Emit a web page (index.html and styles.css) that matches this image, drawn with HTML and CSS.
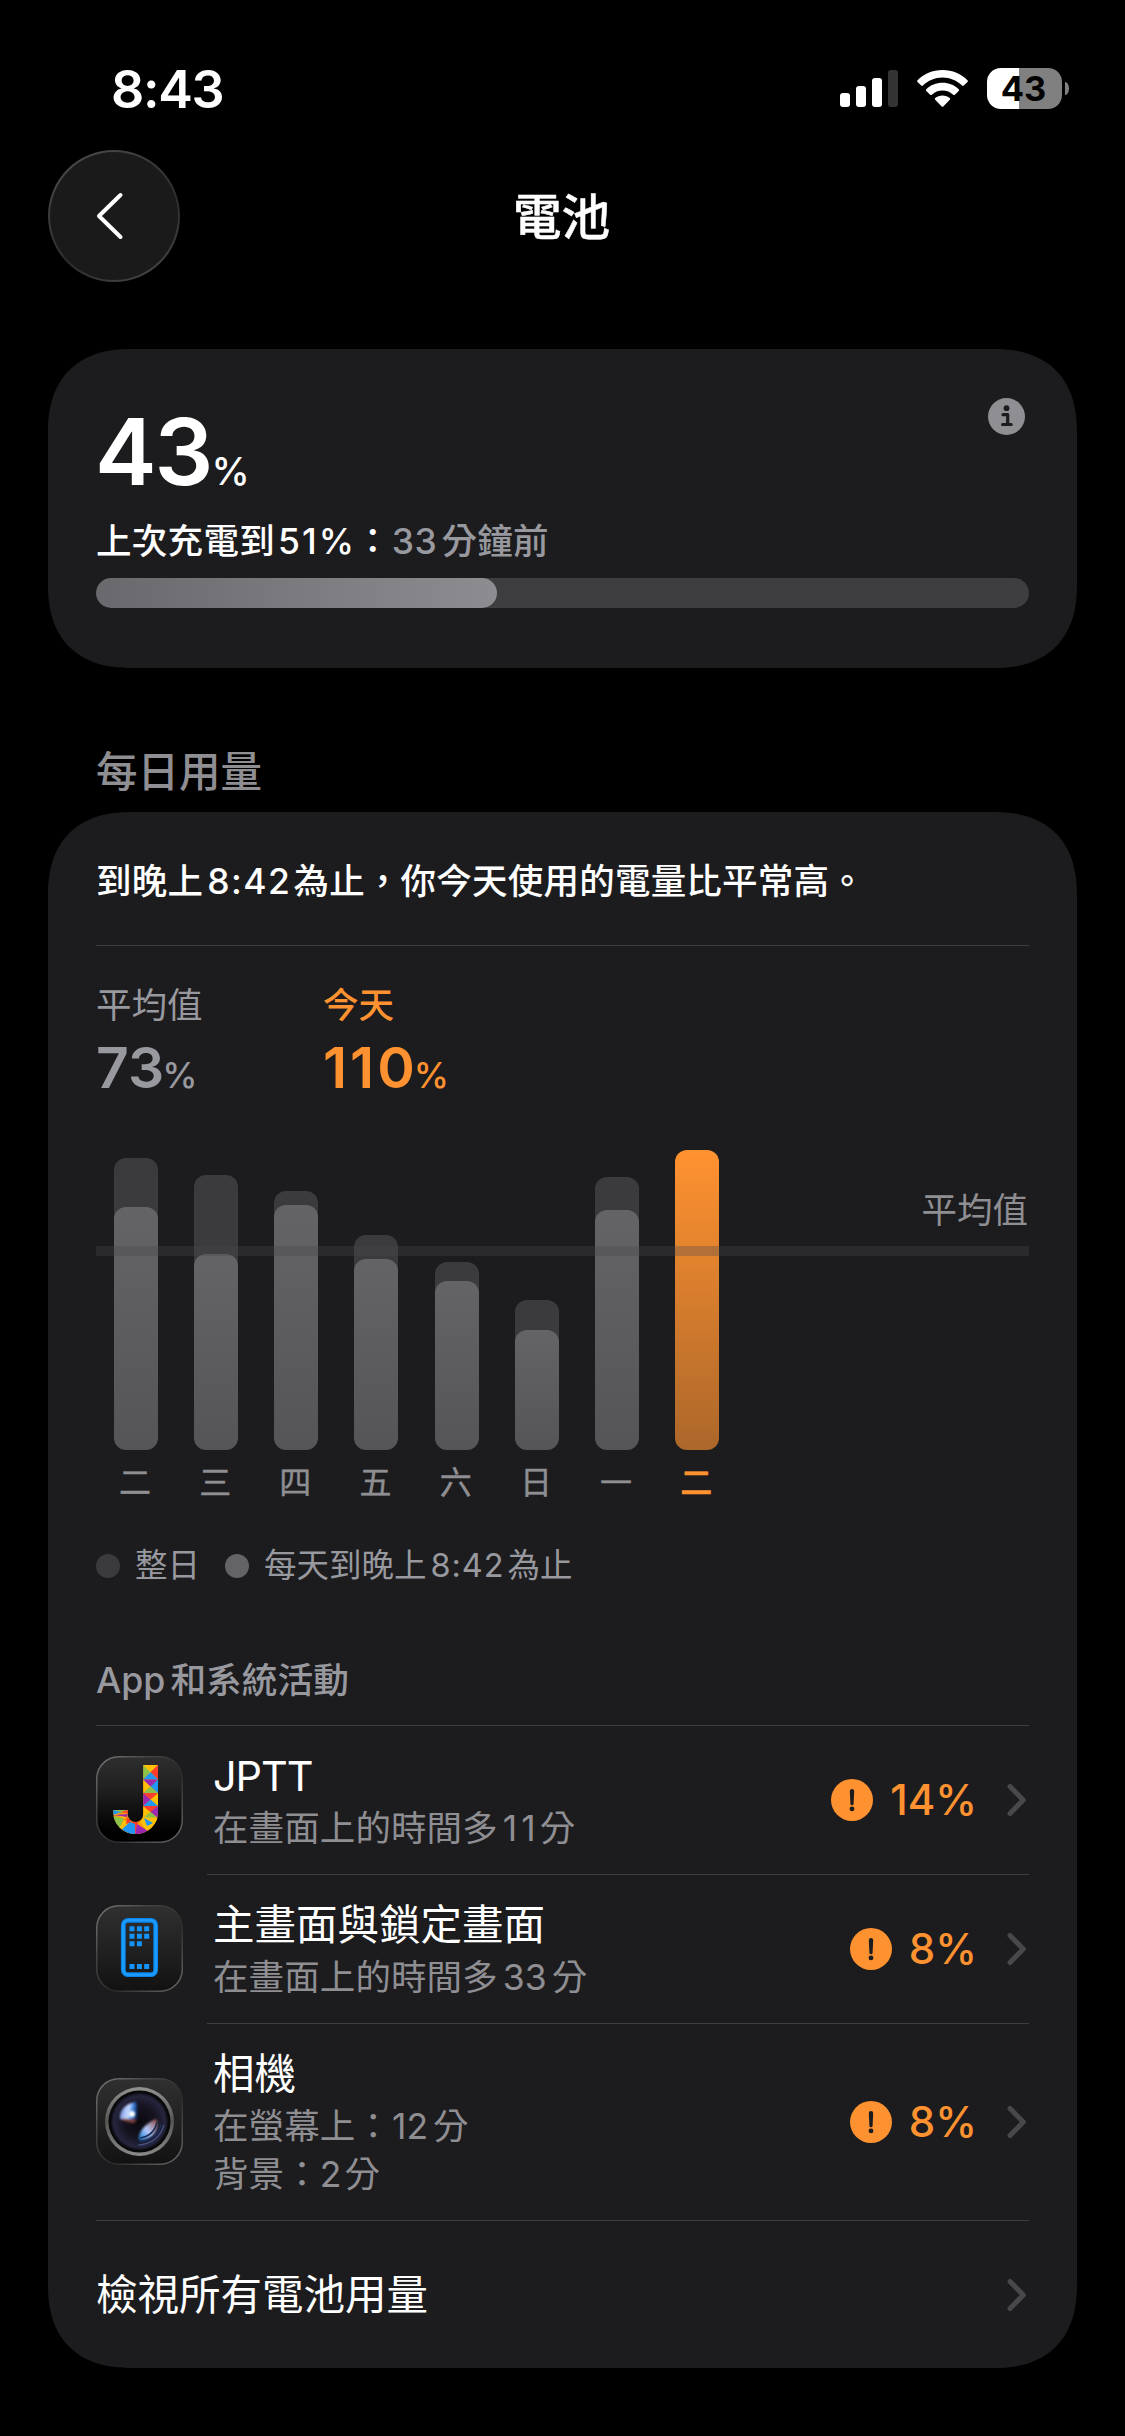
FILE: index.html
```html
<!DOCTYPE html>
<html lang="zh-Hant">
<head>
<meta charset="utf-8">
<title>電池</title>
<link rel="stylesheet" href="styles.css">
</head>
<body>
<svg class="defs" width="0" height="0" aria-hidden="true">
  <defs>
    <linearGradient id="tile" x1="0" y1="0" x2="0" y2="1"><stop offset="0" stop-color="#303030"/><stop offset="1" stop-color="#121212"/></linearGradient>
    <linearGradient id="tileDark" x1="0" y1="0" x2="0" y2="1"><stop offset="0" stop-color="#2e2e2e"/><stop offset=".35" stop-color="#212121"/><stop offset=".9" stop-color="#000"/></linearGradient>
    <linearGradient id="rim" x1="0" y1="0" x2="1" y2="1"><stop offset="0" stop-color="#7c7c7c"/><stop offset=".3" stop-color="#444"/><stop offset=".6" stop-color="#2b2b2b"/><stop offset="1" stop-color="#6a6a6a"/></linearGradient>
    <symbol id="chevron" viewBox="0 0 20 34"><path d="M3 3.5 16.3 17 3 30.5" fill="none" stroke="#48484b" stroke-width="5" stroke-linecap="round" stroke-linejoin="round"/></symbol>
    <symbol id="alert" viewBox="0 0 42 42"><circle cx="21" cy="21" r="21" fill="#ff9230"/><path d="M18.800 12.200a2.200 2.200 0 0 1 4.400 0l-.6 12.500a1.600 1.600 0 0 1-3.200 0z" fill="#1c1c1e"/><circle cx="21" cy="29.900" r="2.400" fill="#1c1c1e"/></symbol>
  </defs>
</svg>

<header class="status">
  <div class="time">8:43</div>
  <div class="indicators">
    <svg class="signal" width="58" height="37" viewBox="0 0 58 37"><g fill="#fff"><rect y="23" width="10" height="14" rx="3"/><rect x="16" y="16" width="10" height="21" rx="3"/><rect x="32" y="8" width="10" height="29" rx="3"/></g><rect x="48" width="10" height="37" rx="3" fill="#333"/></svg>
    <svg class="wifi" width="51" height="38" viewBox="0 0 51 38"><g fill="#fff"><path d="M25.500 0C35.400 0 44.400 3.900 50.500 10.200c.5.5.5 1.200 0 1.700L46.800 15.600c-.5.5-1.200.5-1.700 0C40 10.600 33 7.600 25.500 7.600S11 10.600 5.900 15.600c-.5.5-1.200.5-1.700 0L.5 11.900c-.5-.5-.5-1.200 0-1.700C6.600 3.900 15.600 0 25.500 0z"/><path d="M25.500 12.800c6.300 0 12 2.400 16.200 6.400.5.5.5 1.200 0 1.700l-3.800 3.800c-.5.5-1.200.5-1.700 0-2.800-2.700-6.600-4.200-10.700-4.200s-7.900 1.500-10.700 4.200c-.5.5-1.200.5-1.700 0l-3.800-3.800c-.5-.5-.5-1.200 0-1.700 4.200-4 9.900-6.400 16.200-6.400z"/><path d="M25.500 25.400c2.800 0 5.400 1 7.300 2.700.5.500.5 1.200 0 1.700l-6.500 6.600c-.5.500-1.100.5-1.600 0l-6.500-6.600c-.5-.5-.5-1.200 0-1.700 1.900-1.700 4.500-2.700 7.300-2.700z"/></g></svg>
    <div class="battery"><div class="battery-body">43</div><div class="battery-cap"></div></div>
  </div>
</header>

<nav class="nav">
  <div class="back"><svg width="28" height="48" viewBox="0 0 28 48"><path d="M24.500 3 3 24l21.500 21" fill="none" stroke="#fff" stroke-width="4" stroke-linecap="round" stroke-linejoin="round"/></svg></div>
  <h1 class="title">電池</h1>
</nav>

<section class="card level">
  <div class="level-top">
    <div class="level-value">43<span class="unit">%</span></div>
    <svg class="info" width="37" height="37" viewBox="0 0 37 37"><circle cx="18.500" cy="18.500" r="18.500" fill="#8e8e93"/><circle cx="18.500" cy="10.200" r="2.900" fill="#1c1c1e"/><path d="M15 16.700h4.700v9.700M14.600 26.500h8.600" fill="none" stroke="#1c1c1e" stroke-width="3.200" stroke-linecap="round" stroke-linejoin="round"/></svg>
  </div>
  <div class="level-note">上次充電到<span class="num pct">51%</span>：<span class="ago"><span class="num mins">33</span>分鐘前</span></div>
  <div class="meter"><div class="meter-fill" style="width:43%"></div></div>
</section>

<h2 class="section">每日用量</h2>

<section class="card usage">
  <p class="summary">到晚上<span class="num clock">8:42</span>為止，你今天使用的電量比平常高。</p>
  <div class="stats">
    <div class="stat"><div class="stat-name">平均值</div><div class="stat-value">73<span class="stat-unit">%</span></div></div>
    <div class="stat today"><div class="stat-name">今天</div><div class="stat-value wide">110<span class="stat-unit">%</span></div></div>
  </div>

  <div class="chart">
    <div class="bars">
      <div class="bar" style="height:292px"><div class="part" style="height:243px"></div></div>
      <div class="bar" style="height:275px"><div class="part" style="height:196px"></div></div>
      <div class="bar" style="height:259px"><div class="part" style="height:245px"></div></div>
      <div class="bar" style="height:215px"><div class="part" style="height:191px"></div></div>
      <div class="bar" style="height:188px"><div class="part" style="height:169px"></div></div>
      <div class="bar" style="height:150px"><div class="part" style="height:120px"></div></div>
      <div class="bar" style="height:273px"><div class="part" style="height:240px"></div></div>
      <div class="bar now" style="height:300px"></div>
    </div>
    <div class="average-line"></div>
    <div class="average-name">平均值</div>
  </div>
  <div class="axis"><span>二</span><span>三</span><span>四</span><span>五</span><span>六</span><span>日</span><span>一</span><span class="now-day">二</span></div>
  <div class="legend">
    <span class="dot"></span><span class="key">整日</span>
    <span class="dot light"></span><span class="key">每天到晚上<span class="num clock-small">8:42</span>為止</span>
  </div>

  <h3 class="activity">App<span class="after-app">和系統活動</span></h3>

  <div class="row">
    <svg class="app" width="87" height="87" viewBox="0 0 87 87">
      <clipPath id="j"><path d="M47.300 9H62V56.500A22.300 21.500 0 0 1 17.300 56.500V54H31.700V58A7.800 8 0 0 0 47.300 58Z"/></clipPath>
      <rect x=".75" y=".75" width="85.500" height="85.500" rx="22" fill="url(#tileDark)" stroke="url(#rim)" stroke-width="1.500"/>
      <g clip-path="url(#j)">
        <rect x="17" y="9" width="45" height="70" fill="#ff9800"/>
        <path fill="#8bc34a" d="M47 9v14.500l7.500-7.200zM47 37h15l-7.500-6.700zM47 62h15l-7.500-6.200zM17 54h15l-7 3zM17 60l11 2.500L23 74l-8-4zM46 64l16-3v5z"/>
        <path fill="#ffc107" d="M47 9h15l-7.500 7.300zM47 23.500V37l7.500-6.700zM62 37v13l-7.500-6.500zM47 50v12l7.500-6.200zM17 58l15 1-4 3.500zM28 64l-6 10 10 3 2-10zM44 66l8 10 10-6v-8l-14-1z"/>
        <path fill="#ff3d2e" d="M62 9v14.500l-7.500-7.200zM47 37h15l-7.500 6.500zM47 50h15l-7.500 6zM32 54v3l-8-1zM31 61l-1 7 6-2zM36 66l3 13 3-13z"/>
        <path fill="#2196f3" d="M47 23.500h15l-7.500-7.200zM62 23.500V37l-7.500-6.700zM47 50h15l-7.500-6.500zM17 54v5l8-3zM34 66l-10 9 15 5V68zM48 62l3 8 6-3z"/>
        <path fill="#9c27b0" d="M47 23.500h15l-7.500 7zM47 37v13l7.500-6.500zM62 50v12l-7.500-6.200zM17 59l15-1-1 3zM39 79l2-11 14 9-8 3z"/>
      </g>
    </svg>
    <div class="content lined">
      <div class="text"><div class="name latin">JPTT</div><div class="detail">在畫面上的時間多<span class="num eleven">11</span>分</div></div>
      <div class="value"><svg width="42" height="42"><use href="#alert"/></svg><span class="share">14%</span><svg width="20" height="34"><use href="#chevron"/></svg></div>
    </div>
  </div>

  <div class="row">
    <svg class="app" width="87" height="87" viewBox="0 0 87 87">
      <rect x=".75" y=".75" width="85.500" height="85.500" rx="22" fill="url(#tile)" stroke="url(#rim)" stroke-width="1.500"/>
      <rect x="27.300" y="15.300" width="32.400" height="54.400" rx="5" fill="none" stroke="#0a84e8" stroke-width="4.800"/>
      <rect x="27.300" y="15.300" width="32.400" height="54.400" rx="5" fill="none" stroke="#1c9bff" stroke-width="2.600"/>
      <path fill="#1493fa" d="M33.500 21.300h5v5h-5zM40.900 21.300h5v5h-5zM48.200 21.300h5v5h-5zM33.500 28.700h5v5h-5zM40.900 28.700h5v5h-5zM48.200 28.700h5v5h-5zM33.500 36.200h5v5h-5zM40.900 36.200h5v5h-5zM33.500 59h5v5h-5zM40.900 59h5v5h-5zM48.200 59h5v5h-5z"/>
    </svg>
    <div class="content lined">
      <div class="text"><div class="name">主畫面與鎖定畫面</div><div class="detail">在畫面上的時間多<span class="num many">33</span>分</div></div>
      <div class="value"><svg width="42" height="42"><use href="#alert"/></svg><span class="share">8%</span><svg width="20" height="34"><use href="#chevron"/></svg></div>
    </div>
  </div>

  <div class="row tall">
    <svg class="app" width="87" height="87" viewBox="0 0 87 87">
      <defs>
        <linearGradient id="ring" x1="0" y1="0" x2="0" y2="1"><stop offset="0" stop-color="#929290"/><stop offset=".5" stop-color="#555553"/><stop offset="1" stop-color="#8a8a88"/></linearGradient>
        <radialGradient id="glass"><stop offset="0" stop-color="#0b0910"/><stop offset=".55" stop-color="#15131f"/><stop offset=".9" stop-color="#25253e"/><stop offset="1" stop-color="#101018"/></radialGradient>
        <linearGradient id="flareA" x1="0" y1="0" x2="1" y2=".15"><stop offset="0" stop-color="#6785d8"/><stop offset=".55" stop-color="#c9dcff"/><stop offset=".75" stop-color="#478fe8"/><stop offset="1" stop-color="#0b2c60"/></linearGradient>
        <linearGradient id="flareB" x1="0" y1="1" x2="1" y2="0"><stop offset="0" stop-color="#0879cf"/><stop offset=".45" stop-color="#b5caff"/><stop offset="1" stop-color="#8d4438"/></linearGradient>
        <filter id="soft" x="-30%" y="-30%" width="160%" height="160%"><feGaussianBlur stdDeviation="1"/></filter>
      </defs>
      <rect x=".75" y=".75" width="85.500" height="85.500" rx="22" fill="url(#tile)" stroke="url(#rim)" stroke-width="1.500"/>
      <circle cx="43.500" cy="43.500" r="34.500" fill="url(#ring)"/>
      <circle cx="43.500" cy="43.500" r="31" fill="#08090a"/>
      <circle cx="43.500" cy="43.500" r="28.500" fill="url(#glass)"/>
      <g filter="url(#soft)">
        <path d="M24 41c-1-9 6-16 16-17 2 5 2 11 1 17z" fill="url(#flareA)"/>
        <path d="M24 41q9-1 17 1l-3 3q-9-1-14-4z" fill="#7d4036"/>
        <path d="M43 62c-1-7 5-16 17-21 5 8-3 22-17 21z" fill="url(#flareB)"/>
      </g>
      <circle cx="36" cy="36" r="3" fill="#fff" filter="url(#soft)"/>
      <path d="M44 60q14-2 17-16M44 64q18-2 21-18" fill="none" stroke="#1a2b54" stroke-width="1.500"/>
      <path d="M42 67q20-1 26-20" fill="none" stroke="#5566a5" stroke-width="1.200" opacity=".7"/>
    </svg>
    <div class="content">
      <div class="text"><div class="name">相機</div><div class="detail">在螢幕上：<span class="num twelve">12</span>分</div><div class="detail second">背景：<span class="num two">2</span>分</div></div>
      <div class="value"><svg width="42" height="42"><use href="#alert"/></svg><span class="share">8%</span><svg width="20" height="34"><use href="#chevron"/></svg></div>
    </div>
  </div>

  <div class="all"><span class="all-name">檢視所有電池用量</span><svg width="20" height="34"><use href="#chevron"/></svg></div>
</section>
</body>
</html>
```
FILE: styles.css
```css
* { box-sizing: border-box; margin: 0; padding: 0; }
body {
  width: 1125px; height: 2436px; overflow: hidden;
  background: #000; color: #fff;
  font-family: Inter, "Noto Sans CJK TC", sans-serif;
  font-size: 35.500px; font-weight: 400;
}
svg { display: block; flex: none; }
.defs { position: absolute; }
.num { letter-spacing: 0; }

.status { display: flex; justify-content: space-between; height: 150px; padding: 60px 56px 0 111px; }
.time { font-size: 52px; font-weight: 600; line-height: 60px; letter-spacing: -1.300px; }
.indicators { display: flex; align-items: flex-start; padding-top: 8px; }
.signal { margin-top: 2px; }
.wifi { margin: 2px 0 0 19px; }
.battery { display: flex; align-items: center; gap: 3px; margin-left: 19px; }
.battery-body {
  width: 75px; height: 41px; padding-right: 2px; border-radius: 14px;
  background: linear-gradient(90deg, #fff 43%, #808080 43%);
  color: #000; font-size: 34.500px; font-weight: 700; line-height: 41px; text-align: center;
}
.battery-cap { width: 4px; height: 13px; border-radius: 0 4px 4px 0 / 0 7px 7px 0; background: #808080; }

.nav { display: grid; grid-template-columns: 132px 1fr 132px; align-items: center; height: 132px; margin: 0 48px; }
.back {
  display: flex; align-items: center; justify-content: center; width: 132px; height: 132px; padding-right: 9px;
  border: 2px solid transparent; border-radius: 50%;
  background: linear-gradient(#1a1a1b, #1a1a1b) padding-box, linear-gradient(150deg, #505050, #3a3a3a 35%, #2c2c2c 60%, #4c4c4c) border-box;
}
.title { padding: 3px 2px 0 0; font-size: 48.500px; font-weight: 500; line-height: 60px; text-align: center; -webkit-text-stroke: .5px #fff; }

.card { margin: 0 48px; padding: 0 48px; background: #1c1c1e; border-radius: 84px; corner-shape: superellipse(1.25); }

.level { height: 319px; margin-top: 67px; padding-top: 49px; }
.level-top { display: flex; justify-content: space-between; align-items: flex-start; height: 105px; padding-right: 4px; }
.level-value { padding-top: 1px; font-size: 92.500px; font-weight: 600; line-height: 105px; margin-left: -1px; letter-spacing: -2px; }
.unit { font-size: 38.500px; font-weight: 500; letter-spacing: 0; }
.level-note { margin-top: 14px; font-weight: 500; line-height: 50px; height: 50px; letter-spacing: .3px; white-space: nowrap; }
.pct { margin: 0 -1px 0 3px; letter-spacing: 2px; }
.ago { color: #98989f; }
.mins { margin: 0 4px 0 1px; letter-spacing: .6px; }
.meter { height: 30px; margin-top: 11px; border-radius: 15px; background: #3e3e40; overflow: hidden; }
.meter-fill { height: 30px; border-radius: 15px; background: linear-gradient(90deg, #69696d, #8c8c91); }

.section { margin: 78px 96px 0; height: 66px; color: #8e8e93; font-size: 41.500px; font-weight: 500; line-height: 52px; }

.usage { height: 1556px; }
.summary { height: 134px; padding-top: 45px; border-bottom: 1px solid #3e3e41; font-weight: 500; line-height: 50px; letter-spacing: .22px; white-space: nowrap; }
.clock { margin: 0 2px 0 4px; letter-spacing: 1.500px; }

.stats { display: flex; height: 204px; padding-top: 35px; color: #98989f; }
.stat { width: 227px; }
.stat-name { height: 50px; line-height: 50px; }
.stat-value { margin-top: 7px; font-size: 57px; font-weight: 600; line-height: 60px; }
.stat-unit { font-size: 35.500px; font-weight: 500; letter-spacing: 0; margin-left: -2px; }
.wide { letter-spacing: 3px; }
.wide .stat-unit { margin-left: -4px; }
.today { color: #ff9230; }
.today .stat-name { font-weight: 500; }

.chart { position: relative; height: 300px; }
.bars { display: flex; align-items: flex-end; gap: 36.200px; height: 300px; padding-left: 17.800px; }
.bar { display: flex; align-items: flex-end; width: 44px; border-radius: 12px; background: #3b3b3d; overflow: hidden; }
.part { width: 44px; border-radius: 12px; background: linear-gradient(#646466, #555558); }
.now { background: linear-gradient(#ff9230, #ac672a); }
.average-line { position: absolute; left: 0; right: 0; top: 96px; height: 10px; background: rgba(72, 72, 77, .32); }
.average-name { position: absolute; right: 1px; top: 36px; color: #8e8e93; line-height: 50px; }

.axis { display: flex; gap: 36.200px; height: 65px; padding: 12px 0 0 17px; color: #8e8e93; font-size: 32px; line-height: 41px; }
.axis span { width: 44px; text-align: center; -webkit-text-stroke: .4px currentColor; }
.axis .now-day { color: #ff9230; font-weight: 500; }

.legend { display: flex; align-items: center; height: 102px; color: #98989f; font-size: 32.500px; line-height: 50px; white-space: nowrap; }
.dot { width: 24px; height: 24px; margin-right: 15px; border-radius: 50%; background: #3b3b3d; }
.light { margin-left: 25px; background: #646467; }
.clock-small { margin: 0 3px 0 4px; letter-spacing: .9px; }

.activity { height: 109px; padding-top: 38px; border-bottom: 1px solid #3e3e41; color: #98989f; font-size: 35.700px; font-weight: 500; line-height: 50px; }
.after-app { margin-left: 5px; }

.row { display: flex; align-items: center; height: 149px; gap: 24px; }
.app { margin-bottom: 2px; }
.content { display: flex; flex: 1; align-self: stretch; justify-content: space-between; }
.lined { border-bottom: 1px solid #3e3e41; }
.text { padding: 24px 0 0 6px; }
.name { font-size: 41.500px; line-height: 52px; white-space: nowrap; }
.latin { letter-spacing: -1.100px; }
.detail { margin-top: 3px; color: #8e8e93; line-height: 48px; letter-spacing: .1px; white-space: nowrap; }
.second { margin-top: 0; }
.eleven { margin: 0 0 0 5px; letter-spacing: 4px; }
.many { margin: 0 5px 0 5px; }
.twelve { margin: 0 5px 0 1px; }
.two { margin: 0 3px 0 0; }
.value { display: flex; align-items: center; padding: 0 2px 1px 0; color: #ff9230; }
.share { margin: 0 30px 0 17px; font-size: 42px; font-weight: 500; line-height: 50px; }
.tall { height: 197px; border-bottom: 1px solid #3e3e41; }

.all { display: flex; align-items: center; justify-content: space-between; height: 147px; padding-right: 2px; }
.all-name { font-size: 41.500px; line-height: 52px; }
```
